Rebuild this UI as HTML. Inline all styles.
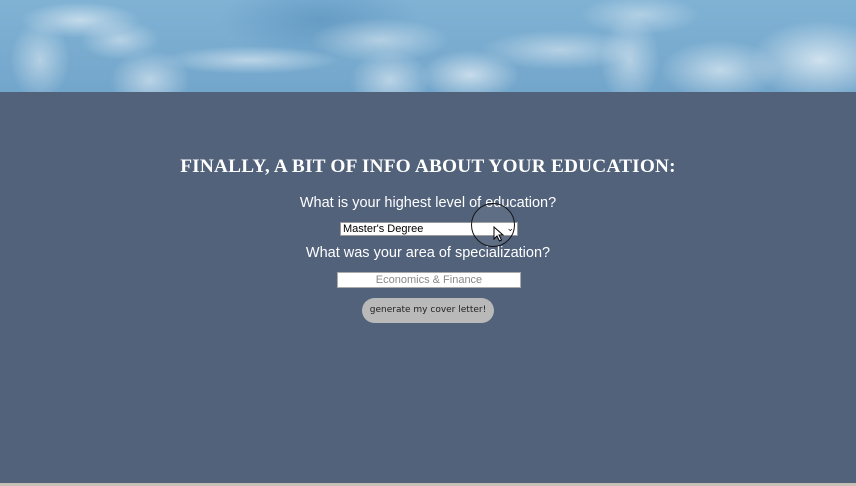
<!DOCTYPE html>
<html><head><meta charset="utf-8">
<style>
html,body{margin:0;padding:0;width:856px;height:486px;overflow:hidden;background:#52627b;}
.hdr{position:absolute;left:0;top:0;width:856px;height:92px;overflow:hidden;
background:
radial-gradient(ellipse 60px 18px at 80px 20px,rgba(255,255,255,.55),transparent),
radial-gradient(ellipse 30px 40px at 40px 60px,rgba(255,255,255,.45),transparent),
radial-gradient(ellipse 90px 14px at 250px 60px,rgba(255,255,255,.5),transparent),
radial-gradient(ellipse 70px 22px at 380px 40px,rgba(255,255,255,.45),transparent),
radial-gradient(ellipse 50px 25px at 470px 75px,rgba(255,255,255,.6),transparent),
radial-gradient(ellipse 80px 20px at 560px 50px,rgba(255,255,255,.45),transparent),
radial-gradient(ellipse 40px 30px at 390px 80px,rgba(255,255,255,.5),transparent),
radial-gradient(ellipse 60px 30px at 720px 70px,rgba(255,255,255,.55),transparent),
radial-gradient(ellipse 70px 40px at 820px 60px,rgba(255,255,255,.65),transparent),
radial-gradient(ellipse 40px 30px at 150px 80px,rgba(255,255,255,.5),transparent),
radial-gradient(ellipse 60px 20px at 640px 15px,rgba(255,255,255,.4),transparent),
radial-gradient(ellipse 30px 45px at 630px 60px,rgba(255,255,255,.45),transparent),
radial-gradient(ellipse 40px 20px at 120px 40px,rgba(255,255,255,.45),transparent),
radial-gradient(ellipse 100px 40px at 320px 20px,rgba(60,120,170,.35),transparent),
linear-gradient(180deg,#80b2d4,#73a6cb);}
.title{position:absolute;left:0;width:856px;top:156px;text-align:center;color:#fff;font:bold 19.3px "Liberation Serif",serif;letter-spacing:.2px;}
.q{position:absolute;left:0;width:856px;text-align:center;color:#fff;font:14.5px "Liberation Sans",sans-serif;}
.sel{position:absolute;left:340px;top:222px;width:174px;height:12px;background:#fff;border:1px solid #999;font:11px "Liberation Sans",sans-serif;color:#000;line-height:12px;padding-left:2px;box-sizing:content-box}
.inp{position:absolute;left:337px;top:272px;width:182px;height:14px;background:#fff;border:1px solid #aaa;font:11px "Liberation Sans",sans-serif;color:#888;text-align:center;line-height:14px}
.btn{position:absolute;left:362px;top:298px;width:132px;height:25px;border-radius:13px;background:#b9b9b9;font:9px "DejaVu Sans",sans-serif;color:#222;text-align:center;line-height:25px}
.ring{position:absolute;left:471px;top:203px;width:42px;height:42px;border:1.5px solid #111;border-radius:50%;background:rgba(255,255,255,.08)}
.foot{position:absolute;left:0;top:483px;width:856px;height:3px;background:#c8c0b6}
</style></head><body>
<div class="hdr"></div>
<div class="title">FINALLY, A BIT OF INFO ABOUT YOUR EDUCATION:</div>
<div class="q" style="top:195px">What is your highest level of education?</div>
<div class="sel">Master's Degree<span style="position:absolute;right:3px;top:-1px;font-size:9px">&#8964;</span></div>
<div class="q" style="top:245px">What was your area of specialization?</div>
<div class="inp">Economics &amp; Finance</div>
<div class="btn">generate my cover letter!</div>
<div class="ring"></div>
<svg style="position:absolute;left:493px;top:226px" width="12" height="16" viewBox="0 0 12 16"><path d="M1 1 L1 13 L4 10 L6.5 15 L8.5 14 L6 9 L10 9 Z" fill="#fff" stroke="#000" stroke-width="1"/></svg>
<div class="foot"></div>
</body></html>
